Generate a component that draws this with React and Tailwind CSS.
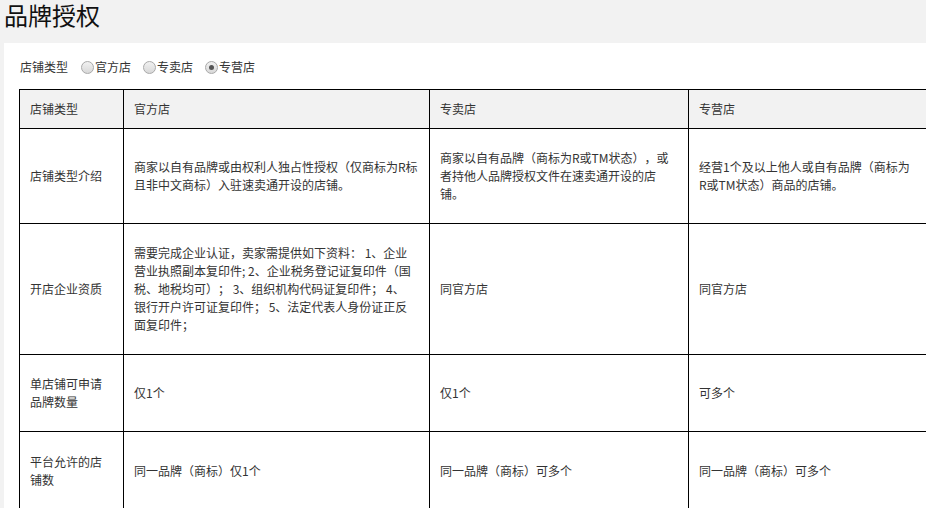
import React from "react";

const font = { fontFamily: '"Microsoft YaHei","Noto Sans CJK SC","Noto Sans",sans-serif' };

function Radio({ checked, label }) {
  return (
    <label className="flex items-center gap-[1px]">
      <span className="relative flex h-[13px] w-[13px] items-center justify-center rounded-full border border-[#a9a9a9] bg-gradient-to-b from-[#f1f1f1] to-[#d8d8d8]">
        {checked && <span className="h-[5px] w-[5px] rounded-full bg-[#555]" />}
      </span>
      <span>{label}</span>
    </label>
  );
}

const qual = (
  <>
    需要完成企业认证，卖家需提供如下资料： 1、企业营业执照副本复印件; 2、企业税务登记证复印件（国税、地税均可）； 3、组织机构代码证复印件； 4、
    <br />
    银行开户许可证复印件； 5、法定代表人身份证正反面复印件；
  </>
);

const rows = [
  { h: "h-[39px]", head: true, cells: ["店铺类型", "官方店", "专卖店", "专营店"] },
  {
    h: "h-[95px]",
    cells: [
      "店铺类型介绍",
      "商家以自有品牌或由权利人独占性授权（仅商标为R标且非中文商标）入驻速卖通开设的店铺。",
      "商家以自有品牌（商标为R或TM状态），或者持他人品牌授权文件在速卖通开设的店铺。",
      "经营1个及以上他人或自有品牌（商标为R或TM状态）商品的店铺。",
    ],
  },
  { h: "h-[131px]", cells: ["开店企业资质", qual, "同官方店", "同官方店"] },
  { h: "h-[77px]", cells: ["单店铺可申请品牌数量", "仅1个", "仅1个", "可多个"] },
  { h: "h-[78px]", cells: ["平台允许的店铺数", "同一品牌（商标）仅1个", "同一品牌（商标）可多个", "同一品牌（商标）可多个"] },
];

export default function App() {
  return (
    <div className="h-[508px] w-[926px] overflow-hidden bg-[#f2f2f2] text-[#333] [text-spacing-trim:space-all]" style={font}>
      <div className="h-[43px] pl-[4px] pt-[1px] text-[24px] leading-[28px] text-[#111]">品牌授权</div>
      <div className="ml-[4px] h-[500px] w-[1000px] bg-white pl-[15px]">
        <div className="flex h-[46px] items-center gap-[12px] pl-[1px] pt-[2px] text-[12px]">
          <span className="mr-[1px]">店铺类型</span>
          <Radio label="官方店" />
          <Radio label="专卖店" />
          <Radio checked label="专营店" />
        </div>
        <table className="w-[960px] table-fixed border-collapse text-[12px] leading-[18px]">
          <colgroup>
            <col className="w-[104px]" />
            <col className="w-[306px]" />
            <col className="w-[259px]" />
            <col />
          </colgroup>
          <tbody>
            {rows.map((r, i) => (
              <tr key={i} className={`${r.h} ${r.head ? "bg-[#f2f2f2]" : ""}`}>
                {r.cells.map((c, j) => (
                  <td key={j} className="border border-black px-[10px] align-middle">
                    <div className={j === 3 ? "w-[216px]" : ""}>{c}</div>
                  </td>
                ))}
              </tr>
            ))}
          </tbody>
        </table>
      </div>
    </div>
  );
}
